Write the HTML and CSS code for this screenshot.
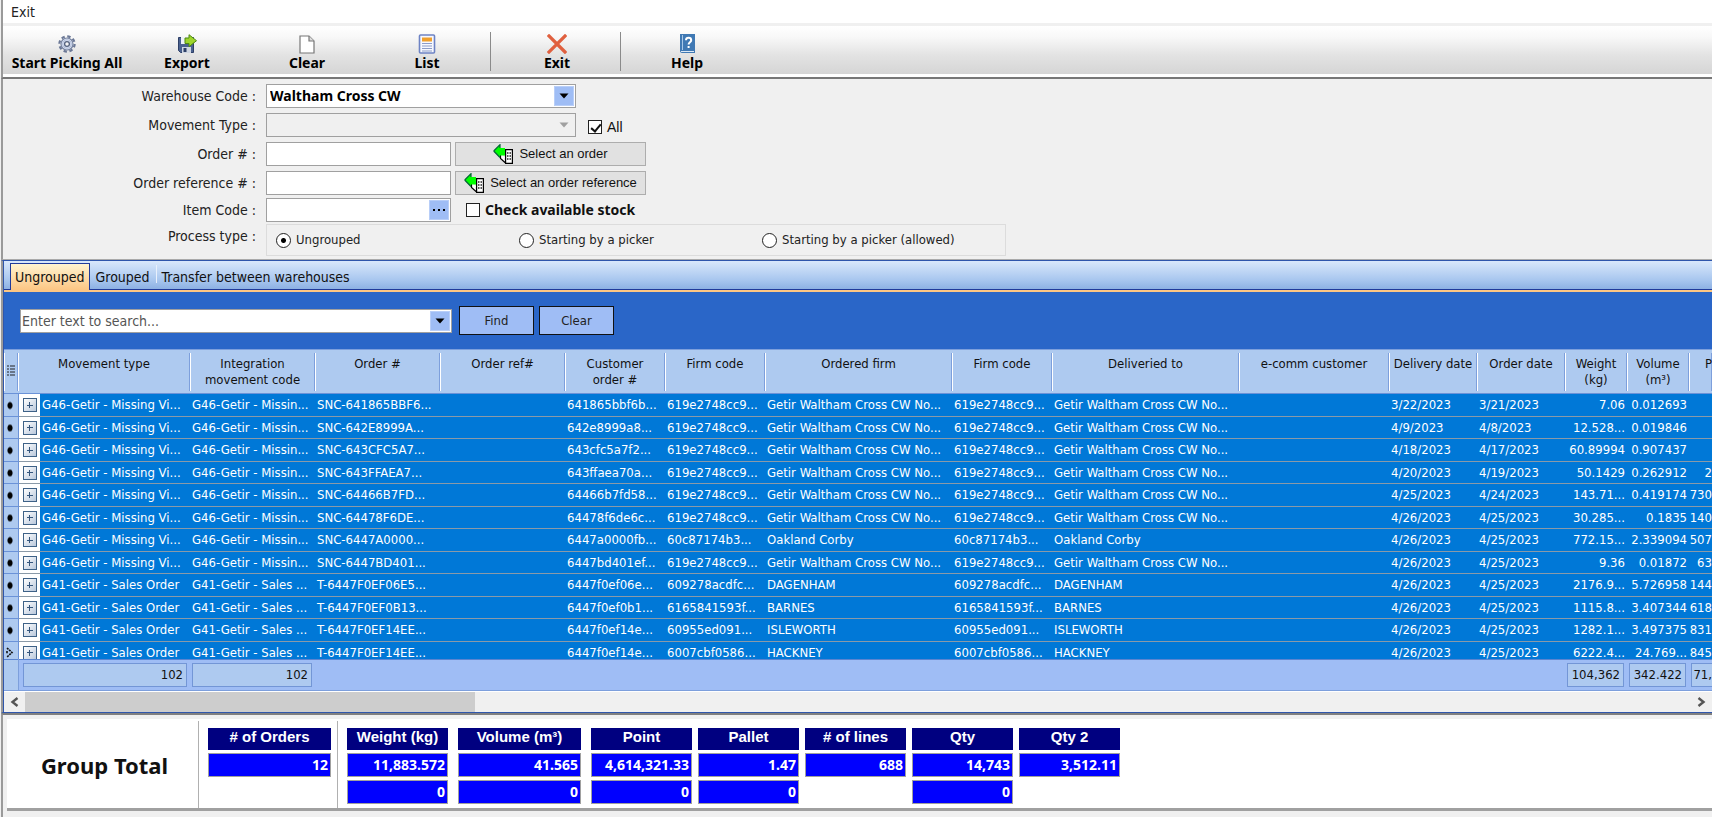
FILE: index.html
```html
<!DOCTYPE html>
<html lang="en">
<head>
<meta charset="utf-8">
<title>Order picking</title>
<link rel="stylesheet" href="styles.css">
</head>
<body>
<div class="window">
  <nav class="menubar"><button type="button">Exit</button></nav>

  <header class="toolbar">
    <button type="button" class="tool">
      <svg width="20" height="20" viewBox="0 0 20 20" fill="none"><circle cx="10" cy="10" r="7.6" stroke="#6b7896" stroke-width="2.2" stroke-dasharray="3.4 2.57"/><circle cx="10" cy="10" r="6" fill="#dde4f3" stroke="#7683a0" stroke-width="1.2"/><circle cx="10" cy="10" r="2.4" fill="#f5f5f5" stroke="#55627f" stroke-width="1.3"/><circle cx="10" cy="10" r="4.2" stroke="#a9b7d6"/></svg>
      <span>Start Picking All</span></button>
    <button type="button" class="tool">
      <svg width="20" height="20" viewBox="0 0 20 20"><path d="M1.500 3.500h15v15h-13l-2-2z" fill="#4a618f" stroke="#2d3f66"/><path d="M4 3h8v7H4z" fill="#eef2f8"/><path d="M5 13h9v6H5z" fill="#cfd6e2"/><path d="M6.500 14h3v4h-3z" fill="#2d3f66"/><path d="M8 4h4V0.700l7.500 6-7.500 6V9.500H8z" fill="#9ed52c" stroke="#4f8a10" stroke-linejoin="round"/></svg>
      <span>Export</span></button>
    <button type="button" class="tool">
      <svg width="20" height="20" viewBox="0 0 20 20"><path d="M3 2h9l5 5v12H3z" fill="#fff" stroke="#777" stroke-width="1.2"/><path d="M12 2v5h5" fill="#ddd" stroke="#777" stroke-width="1.2"/></svg>
      <span>Clear</span></button>
    <button type="button" class="tool">
      <svg width="20" height="20" viewBox="0 0 20 20"><rect x="2.500" y="1" width="15" height="18" rx="1" fill="#f6f8ff" stroke="#6d83c4" stroke-width="1.6"/><path d="M5 3.500h10v4H5z" fill="#f0a02c"/><path d="M5 9.500h10M5 12h10M5 14.500h10M5 17h10" stroke="#8c9cc8" stroke-width="1.200"/></svg>
      <span>List</span></button>
    <i class="tool-sep"></i>
    <button type="button" class="tool">
      <svg width="20" height="20" viewBox="0 0 20 20"><path d="M2 2l16 16M18 2L2 18" stroke="#e0603f" stroke-width="3.200" stroke-linecap="square"/></svg>
      <span>Exit</span></button>
    <i class="tool-sep"></i>
    <button type="button" class="tool">
      <svg width="20" height="20" viewBox="0 0 20 20"><path d="M3 0h15v19H5a2 2 0 0 1-2-2z" fill="#4079b4"/><path d="M5.500 1v15" stroke="#a9c8e8"/><path d="M4 17.500h13" stroke="#dbe9f6"/><path d="M9 6.200c0-3.200 5.200-3.200 5.200 0 0 2-2.600 2-2.600 4.300M11.600 12v2" fill="none" stroke="#fff" stroke-width="2"/></svg>
      <span>Help</span></button>
  </header>

  <form class="filters">
    <label for="wh">Warehouse Code :</label>
    <div class="field combo wide"><select id="wh" class="strong"><option>Waltham Cross CW</option></select><span class="drop"><svg width="10" height="6" viewBox="0 0 10 6"><path d="M0.500 0.500h9L5 5.500z" fill="#000"/></svg></span></div>

    <label for="mt">Movement Type :</label>
    <div class="line">
      <div class="field combo wide off"><select id="mt" disabled><option></option></select><span class="drop"><svg width="10" height="6" viewBox="0 0 10 6"><path d="M0.500 0.500h9L5 5.500z" fill="#a0a0a0"/></svg></span></div>
      <label class="check all"><input type="checkbox" checked>All</label>
    </div>

    <label for="on">Order # :</label>
    <div class="line">
      <input id="on" class="field short" type="text">
      <button type="button" class="pick"><svg width="20" height="20" viewBox="0 0 20 20"><path d="M7.500 9v5.500l5 4.500v-5" fill="#fff" stroke="#000" stroke-width="1.200"/><path d="M12.600 5.600h6.800v13.800h-6.800z" fill="#fff" stroke="#000" stroke-width="1.200"/><path d="M0.700 7L7 0.700V4h5v7.500H7V13.500z" fill="#0f0"/><path d="M0.700 7L7 0.700V4M0.700 7L7 13.500" fill="none" stroke="#063" stroke-width="1.200"/><path d="M14 9h1.500M16.500 9H18M14 12h1.500M16.500 12H18M14 15h1.500M16.500 15H18" stroke="#222" stroke-width="1.400"/></svg>Select an order</button>
    </div>

    <label for="or">Order reference # :</label>
    <div class="line">
      <input id="or" class="field short" type="text">
      <button type="button" class="pick"><svg width="20" height="20" viewBox="0 0 20 20"><path d="M7.500 9v5.500l5 4.500v-5" fill="#fff" stroke="#000" stroke-width="1.200"/><path d="M12.600 5.600h6.800v13.800h-6.800z" fill="#fff" stroke="#000" stroke-width="1.200"/><path d="M0.700 7L7 0.700V4h5v7.500H7V13.500z" fill="#0f0"/><path d="M0.700 7L7 0.700V4M0.700 7L7 13.500" fill="none" stroke="#063" stroke-width="1.200"/><path d="M14 9h1.500M16.500 9H18M14 12h1.500M16.500 12H18M14 15h1.500M16.500 15H18" stroke="#222" stroke-width="1.400"/></svg>Select an order reference</button>
    </div>

    <label for="ic">Item Code :</label>
    <div class="line">
      <div class="field combo short"><input id="ic" type="text"><button type="button" class="drop" aria-label="Browse items"><svg width="12" height="4" viewBox="0 0 12 4"><path d="M0 1h2v2H0zM5 1h2v2H5zM10 1h2v2h-2z" fill="#000"/></svg></button></div>
      <label class="check stock"><input type="checkbox">Check available stock</label>
    </div>

    <span class="caption" id="pt">Process type :</span>
    <div class="radios" role="radiogroup" aria-labelledby="pt">
      <label><input type="radio" name="p" checked>Ungrouped</label>
      <label><input type="radio" name="p">Starting by a picker</label>
      <label><input type="radio" name="p">Starting by a picker (allowed)</label>
    </div>
  </form>

  <main class="pane">
    <div class="tabs" role="tablist">
      <button type="button" role="tab" aria-selected="true" class="tab active">Ungrouped</button>
      <button type="button" role="tab" class="tab">Grouped</button>
      <button type="button" role="tab" class="tab last">Transfer between warehouses</button>
    </div>
    <div class="search">
      <div class="field combo"><input type="text" placeholder="Enter text to search..." aria-label="Search"><button type="button" class="drop" aria-label="History"><svg width="10" height="6" viewBox="0 0 10 6"><path d="M0.500 0.500h9L5 5.500z" fill="#000"/></svg></button></div>
      <button type="button" class="act">Find</button>
      <button type="button" class="act">Clear</button>
    </div>
    <div class="rows">
      <table class="grid">
        <colgroup><col class="c-ind"><col class="c-exp"><col class="c-150"><col class="c-125"><col class="c-125"><col class="c-125"><col class="c-100"><col class="c-100"><col class="c-187"><col class="c-100"><col class="c-187"><col class="c-150"><col class="c-88"><col class="c-88"><col class="c-62"><col class="c-62"><col></colgroup>
        <thead><tr>
          <th><svg width="8" height="12" viewBox="0 0 8 12"><path d="M0 1h2M3 1h5M0 4h2M3 4h5M0 7h2M3 7h5M0 10h2M3 10h5" stroke="#222" stroke-width="1.200"/></svg></th>
          <th colspan="2">Movement type</th><th>Integration<br>movement code</th><th>Order #</th><th>Order ref#</th><th>Customer<br>order #</th><th>Firm code</th><th>Ordered firm</th><th>Firm code</th><th>Deliveried to</th><th>e-comm customer</th><th>Delivery date</th><th>Order date</th><th>Weight<br>(kg)</th><th>Volume<br>(m³)</th><th class="cut">P</th>
        </tr></thead>
        <tbody>
          <tr><td></td><td><button type="button" aria-label="Expand"></button></td><td>G46-Getir - Missing Vi...</td><td>G46-Getir - Missin...</td><td>SNC-641865BBF6...</td><td></td><td>641865bbf6b...</td><td>619e2748cc9...</td><td>Getir Waltham Cross CW No...</td><td>619e2748cc9...</td><td>Getir Waltham Cross CW No...</td><td></td><td>3/22/2023</td><td>3/21/2023</td><td>7.06</td><td>0.012693</td><td></td></tr>
          <tr><td></td><td><button type="button" aria-label="Expand"></button></td><td>G46-Getir - Missing Vi...</td><td>G46-Getir - Missin...</td><td>SNC-642E8999A...</td><td></td><td>642e8999a8...</td><td>619e2748cc9...</td><td>Getir Waltham Cross CW No...</td><td>619e2748cc9...</td><td>Getir Waltham Cross CW No...</td><td></td><td>4/9/2023</td><td>4/8/2023</td><td>12.528...</td><td>0.019846</td><td></td></tr>
          <tr><td></td><td><button type="button" aria-label="Expand"></button></td><td>G46-Getir - Missing Vi...</td><td>G46-Getir - Missin...</td><td>SNC-643CFC5A7...</td><td></td><td>643cfc5a7f2...</td><td>619e2748cc9...</td><td>Getir Waltham Cross CW No...</td><td>619e2748cc9...</td><td>Getir Waltham Cross CW No...</td><td></td><td>4/18/2023</td><td>4/17/2023</td><td>60.89994</td><td>0.907437</td><td></td></tr>
          <tr><td></td><td><button type="button" aria-label="Expand"></button></td><td>G46-Getir - Missing Vi...</td><td>G46-Getir - Missin...</td><td>SNC-643FFAEA7...</td><td></td><td>643ffaea70a...</td><td>619e2748cc9...</td><td>Getir Waltham Cross CW No...</td><td>619e2748cc9...</td><td>Getir Waltham Cross CW No...</td><td></td><td>4/20/2023</td><td>4/19/2023</td><td>50.1429</td><td>0.262912</td><td>2</td></tr>
          <tr><td></td><td><button type="button" aria-label="Expand"></button></td><td>G46-Getir - Missing Vi...</td><td>G46-Getir - Missin...</td><td>SNC-64466B7FD...</td><td></td><td>64466b7fd58...</td><td>619e2748cc9...</td><td>Getir Waltham Cross CW No...</td><td>619e2748cc9...</td><td>Getir Waltham Cross CW No...</td><td></td><td>4/25/2023</td><td>4/24/2023</td><td>143.71...</td><td>0.419174</td><td>730</td></tr>
          <tr><td></td><td><button type="button" aria-label="Expand"></button></td><td>G46-Getir - Missing Vi...</td><td>G46-Getir - Missin...</td><td>SNC-64478F6DE...</td><td></td><td>64478f6de6c...</td><td>619e2748cc9...</td><td>Getir Waltham Cross CW No...</td><td>619e2748cc9...</td><td>Getir Waltham Cross CW No...</td><td></td><td>4/26/2023</td><td>4/25/2023</td><td>30.285...</td><td>0.1835</td><td>140</td></tr>
          <tr><td></td><td><button type="button" aria-label="Expand"></button></td><td>G46-Getir - Missing Vi...</td><td>G46-Getir - Missin...</td><td>SNC-6447A0000...</td><td></td><td>6447a0000fb...</td><td>60c87174b3...</td><td>Oakland Corby</td><td>60c87174b3...</td><td>Oakland Corby</td><td></td><td>4/26/2023</td><td>4/25/2023</td><td>772.15...</td><td>2.339094</td><td>507</td></tr>
          <tr><td></td><td><button type="button" aria-label="Expand"></button></td><td>G46-Getir - Missing Vi...</td><td>G46-Getir - Missin...</td><td>SNC-6447BD401...</td><td></td><td>6447bd401ef...</td><td>619e2748cc9...</td><td>Getir Waltham Cross CW No...</td><td>619e2748cc9...</td><td>Getir Waltham Cross CW No...</td><td></td><td>4/26/2023</td><td>4/25/2023</td><td>9.36</td><td>0.01872</td><td>63</td></tr>
          <tr><td></td><td><button type="button" aria-label="Expand"></button></td><td>G41-Getir - Sales Order</td><td>G41-Getir - Sales ...</td><td>T-6447F0EF06E5...</td><td></td><td>6447f0ef06e...</td><td>609278acdfc...</td><td>DAGENHAM</td><td>609278acdfc...</td><td>DAGENHAM</td><td></td><td>4/26/2023</td><td>4/25/2023</td><td>2176.9...</td><td>5.726958</td><td>144</td></tr>
          <tr><td></td><td><button type="button" aria-label="Expand"></button></td><td>G41-Getir - Sales Order</td><td>G41-Getir - Sales ...</td><td>T-6447F0EF0B13...</td><td></td><td>6447f0ef0b1...</td><td>6165841593f...</td><td>BARNES</td><td>6165841593f...</td><td>BARNES</td><td></td><td>4/26/2023</td><td>4/25/2023</td><td>1115.8...</td><td>3.407344</td><td>618</td></tr>
          <tr><td></td><td><button type="button" aria-label="Expand"></button></td><td>G41-Getir - Sales Order</td><td>G41-Getir - Sales ...</td><td>T-6447F0EF14EE...</td><td></td><td>6447f0ef14e...</td><td>60955ed091...</td><td>ISLEWORTH</td><td>60955ed091...</td><td>ISLEWORTH</td><td></td><td>4/26/2023</td><td>4/25/2023</td><td>1282.1...</td><td>3.497375</td><td>831</td></tr>
          <tr class="focused"><td><svg width="8" height="11" viewBox="0 0 8 11"><path d="M1 1l5 4.500L1 10M1 4v3" fill="none" stroke="#111" stroke-width="1.600" stroke-dasharray="2 .8"/></svg></td><td><button type="button" aria-label="Expand"></button></td><td>G41-Getir - Sales Order</td><td>G41-Getir - Sales ...</td><td>T-6447F0EF14EE...</td><td></td><td>6447f0ef14e...</td><td>6007cbf0586...</td><td>HACKNEY</td><td>6007cbf0586...</td><td>HACKNEY</td><td></td><td>4/26/2023</td><td>4/25/2023</td><td>6222.4...</td><td>24.769...</td><td>845</td></tr>
        </tbody>
      </table>
    </div>
    <table class="grid sums">
      <colgroup><col class="c-ind"><col class="c-exp"><col class="c-150"><col class="c-125"><col class="c-125"><col class="c-125"><col class="c-100"><col class="c-100"><col class="c-187"><col class="c-100"><col class="c-187"><col class="c-150"><col class="c-88"><col class="c-88"><col class="c-62"><col class="c-62"><col></colgroup>
      <tbody><tr><td></td><td colspan="2"><output>102</output></td><td><output>102</output></td><td colspan="10"></td><td><output>104,362</output></td><td><output>342.422</output></td><td class="cut"><output>71,</output></td></tr></tbody>
    </table>
    <div class="hscroll">
      <button type="button" aria-label="Scroll left"><svg width="9" height="10" viewBox="0 0 9 10"><path d="M7.500 1L2.500 5l5 4" fill="none" stroke="#555" stroke-width="2.400"/></svg></button>
      <span class="thumb"></span>
      <button type="button" aria-label="Scroll right"><svg width="9" height="10" viewBox="0 0 9 10"><path d="M1.500 1l5 4-5 4" fill="none" stroke="#555" stroke-width="2.400"/></svg></button>
    </div>
  </main>

  <section class="totals">
    <div class="sheet">
      <h2>Group Total</h2>
      <div class="orders"><div class="total"><h3># of Orders</h3><output>12</output></div></div>
      <div class="list">
        <div class="total"><h3>Weight (kg)</h3><output>11,883.572</output><output>0</output></div>
        <div class="total big"><h3>Volume (m³)</h3><output>41.565</output><output>0</output></div>
        <div class="total"><h3>Point</h3><output>4,614,321.33</output><output>0</output></div>
        <div class="total"><h3>Pallet</h3><output>1.47</output><output>0</output></div>
        <div class="total"><h3># of lines</h3><output>688</output></div>
        <div class="total"><h3>Qty</h3><output>14,743</output><output>0</output></div>
        <div class="total"><h3>Qty 2</h3><output>3,512.11</output></div>
      </div>
    </div>
  </section>
</div>
</body>
</html>
```
FILE: styles.css
```css
:root {
  --ui: "DejaVu Sans Condensed", "DejaVu Sans", sans-serif;
  --ui-bold: "Noto Sans", sans-serif;
  --sys: "Liberation Sans", Arial, sans-serif;
}
* { box-sizing: border-box; }
body { margin: 0; background: #f0f0f0; color: #222; font: 13px/16px var(--ui); }
button, input, select, output { font: inherit; color: inherit; margin: 0; padding: 0; border: 0; }
button { background: none; }
svg { display: block; flex: none; }

.window { display: flex; flex-direction: column; height: 100vh; overflow: hidden; border-left: 1px solid #f0f0f0; }
.window > * { border-left: 2px solid #9a9a9a; }

.menubar { height: 23px; flex: none; display: flex; align-items: center; padding-left: 8px; background: #fff; font-size: 14px; }

.toolbar { height: 56px; flex: none; display: flex; padding: 3px 0 4px 4px; background: linear-gradient(#f0f0f0 3px, #fff 3px, #f8f8f8 14px, #e3e3e3 32px, #d5d5d5 51px, #fff 51px); border-bottom: 2px solid #777; }
.tool { width: 120px; display: flex; flex-direction: column; align-items: center; padding-top: 8px; color: #000; font: bold 14px/18px var(--ui-bold); white-space: nowrap; }
.tool-sep { width: 10px; margin: 6px 0 2px; background: linear-gradient(#8a8a8a, #8a8a8a) 3px 0 / 1px 100% no-repeat; }

.filters { flex: none; display: grid; grid-template-columns: 253px 1fr; grid-template-rows: 29px 29px 29px 27px 26px 35px; column-gap: 10px; padding-top: 5px; align-items: start; border-bottom: 1px solid #aaa; background: #f0f0f0; }
.filters > label, .caption { text-align: right; font-size: 14px; line-height: 24px; }
.line { display: flex; }
.field { height: 24px; border: 1px solid #a0a0a0; background: #fff; }
.wide { width: 310px; }
.short { width: 185px; }
.combo { display: flex; padding: 1px; }
.combo select, .combo input { flex: 1; min-width: 0; appearance: none; background: none; outline: 0; }
.combo select { padding-left: 2px; opacity: 1; }
.strong { font: bold 14px/18px var(--ui-bold); color: #000; }
.field.off { background: #f0f0f0; }
.drop { width: 20px; display: flex; align-items: center; justify-content: center; background: #9fbdf5; border: 1px solid #b8cef8; }
.off .drop { background: none; border-color: transparent; }
.check { display: flex; align-items: center; height: 24px; color: #111; }
.check input { appearance: none; position: relative; width: 14px; height: 14px; border: 1px solid #222; background: #fff; }
.check input:checked::after { content: ""; position: absolute; left: 4px; top: 1px; width: 4px; height: 8px; border: solid #111; border-width: 0 2px 2px 0; transform: rotate(40deg); }
.all { margin-left: 12px; margin-top: 2px; gap: 5px; font: 14px/18px var(--sys); }
.stock { margin-left: 15px; gap: 5px; font: bold 14px/18px var(--ui-bold); }
.pick { width: 191px; height: 24px; margin-left: 4px; display: flex; align-items: center; justify-content: center; gap: 6px; background: #e1e1e1; border: 1px solid #adadad; font: 13px/18px var(--sys); white-space: nowrap; color: #111; }
.radios { width: 740px; height: 32px; display: grid; grid-template-columns: repeat(3, 243px); padding-left: 9px; align-items: center; border: 1px solid #dcdcdc; }
.radios label { display: flex; align-items: center; gap: 5px; }
.radios input { appearance: none; width: 15px; height: 15px; border: 1px solid #222; border-radius: 50%; background: #fff; }
.radios input:checked { background: radial-gradient(circle, #000 2px, #fff 3px); }

.pane { flex: 1; min-height: 0; display: flex; flex-direction: column; border-top: 1px solid #2f56ab; border-bottom: 1px solid #2f56ab; background: #2a66c8; box-shadow: inset 1px 0 #2f56ab; padding-left: 1px; }
.tabs { flex: none; height: 31px; display: flex; align-items: flex-end; padding: 2px 0 3px 6px; font-size: 14px; background: linear-gradient(#fcc684, #fcc684) 0 100% / 100% 2px no-repeat, linear-gradient(#203a9a, #203a9a) 0 28px / 100% 1px no-repeat, linear-gradient(#d9e8fb, #a9c7ef 60%, #84aadf); }
.tab { height: 25px; line-height: 22px; padding: 0 6px; color: #111; white-space: nowrap; }
.tab.active { height: 27px; margin-bottom: -1px; padding: 0 4px; border: 1px solid #203a9a; border-bottom: 0; background: linear-gradient(#fff3cf, #fcc684); }
.tab.last { background: linear-gradient(#e8f0fc, #e8f0fc) 0 1px / 1px 18px no-repeat; }
.search { flex: none; display: flex; align-items: center; height: 57px; padding: 0 0 0 16px; }
.search .field { width: 432px; margin-right: 7px; font-size: 14px; }
.search input::placeholder { color: #555; opacity: 1; }
.act { width: 75px; height: 29px; margin-right: 5px; background: #9fbdf5; border: 1px solid #111; }

.rows { flex: 1; min-height: 0; overflow: hidden; }
.grid { width: 100%; table-layout: fixed; border-collapse: collapse; border-spacing: 0; }
.c-ind { width: 14px; } .c-exp { width: 22px; } .c-62 { width: 62px; } .c-88 { width: 88px; } .c-100 { width: 100px; }
.c-125 { width: 125px; } .c-150 { width: 150px; } .c-187 { width: 187px; }
th, td { padding: 0 2px; white-space: nowrap; overflow: hidden; }
th { height: 44px; padding-top: 6px; vertical-align: top; font-weight: normal; color: #111; background: linear-gradient(#fff, #fff) 0 3px / 1px 38px no-repeat, linear-gradient(#7d9fdc, #7d9fdc) 100% 3px / 1px 38px no-repeat, #aecaf0; border-top: 1px solid #7d9fdc; border-bottom: 1px solid #6a92d8; }
th:first-child { padding: 15px 0 0 3px; }
th.cut, .rows td:last-child { text-align: right; padding: 6px 0 0; }
.rows td { height: 22px; color: #fff; background: #0078d7; border-bottom: 1px solid #8a9aa8; }
.rows tr:nth-child(odd) td { height: 23px; }
.rows td:last-child { padding: 0; }
.rows td:nth-child(15), .rows td:nth-child(16) { text-align: right; }
.rows td:nth-child(1) { background: radial-gradient(ellipse 3px 4px at 6px 50%, #000 70%, transparent 100%) #aecaf0; border-right: 1px solid #6a92d8; border-color: #6a92d8; }
.rows td:nth-child(2) { background: #fff; padding: 0 0 0 4px; }
.rows td button { display: block; width: 14px; height: 14px; border: 1px solid #3d6187; background: linear-gradient(#34557c, #34557c) 50% 50% / 6px 1px no-repeat, linear-gradient(#34557c, #34557c) 50% 50% / 1px 6px no-repeat, linear-gradient(135deg, #fff, #b9c8dc); }
.rows .focused td { border-top: 1px dotted #e8913c; }
.rows .focused td:nth-child(1) { background: #aecaf0; }

.sums { flex: none; background: #9fbdf5; }
.sums td { height: 31px; border-top: 1px solid #5b84d0; border-bottom: 1px solid #7d9fdc; padding: 0 3px 0 2px; }
.sums td:first-child { background: #aecaf0; border-right: 1px solid #7d9fdc; }
.sums td:nth-child(2) { padding-left: 4px; }
.sums output { display: block; height: 24px; line-height: 22px; padding-right: 3px; text-align: right; background: #aecaf0; border: 1px solid #7396d6; color: #111; }
.sums .cut { padding-right: 0; }
.sums .cut output { padding: 0; border-right: 0; }

.hscroll { flex: none; height: 21px; display: flex; background: #f0f0f0; border-top: 1px solid #fff; }
.hscroll button { width: 21px; display: flex; align-items: center; justify-content: center; }
.hscroll .thumb { width: 450px; margin-right: auto; background: #cdcdcd; }

.totals { flex: none; height: 104px; padding: 4px 0 5px 4px; border-top: 2px solid #808080; background: #f0f0f0; }
.sheet { height: 92px; display: flex; background: #fff; border-bottom: 3px solid #a0a0a0; padding-top: 2px; }
.sheet h2 { width: 191px; margin: 0; padding-left: 4px; display: flex; align-items: center; justify-content: center; color: #111; font: bold 22px/28px var(--ui-bold); }
.orders { border: solid #b0b0b0; border-width: 0 1px; padding: 7px 6px 0 9px; }
.list { display: flex; gap: 6px; padding: 7px 0 0 9px; }
.total { width: 101px; display: flex; flex-direction: column; gap: 3px; }
.total.big, .orders .total { width: 123px; }
.total.big { margin: 0 4px; }
.total h3 { margin: 0; height: 22px; background: #000080; color: #fff; text-align: center; font: bold 15px/18px var(--sys); }
.total output { height: 24px; background: #00f; border: 1px solid #a0a0a0; color: #fff; text-align: right; padding-right: 2px; font: bold 14px/21px var(--ui-bold); }
```
